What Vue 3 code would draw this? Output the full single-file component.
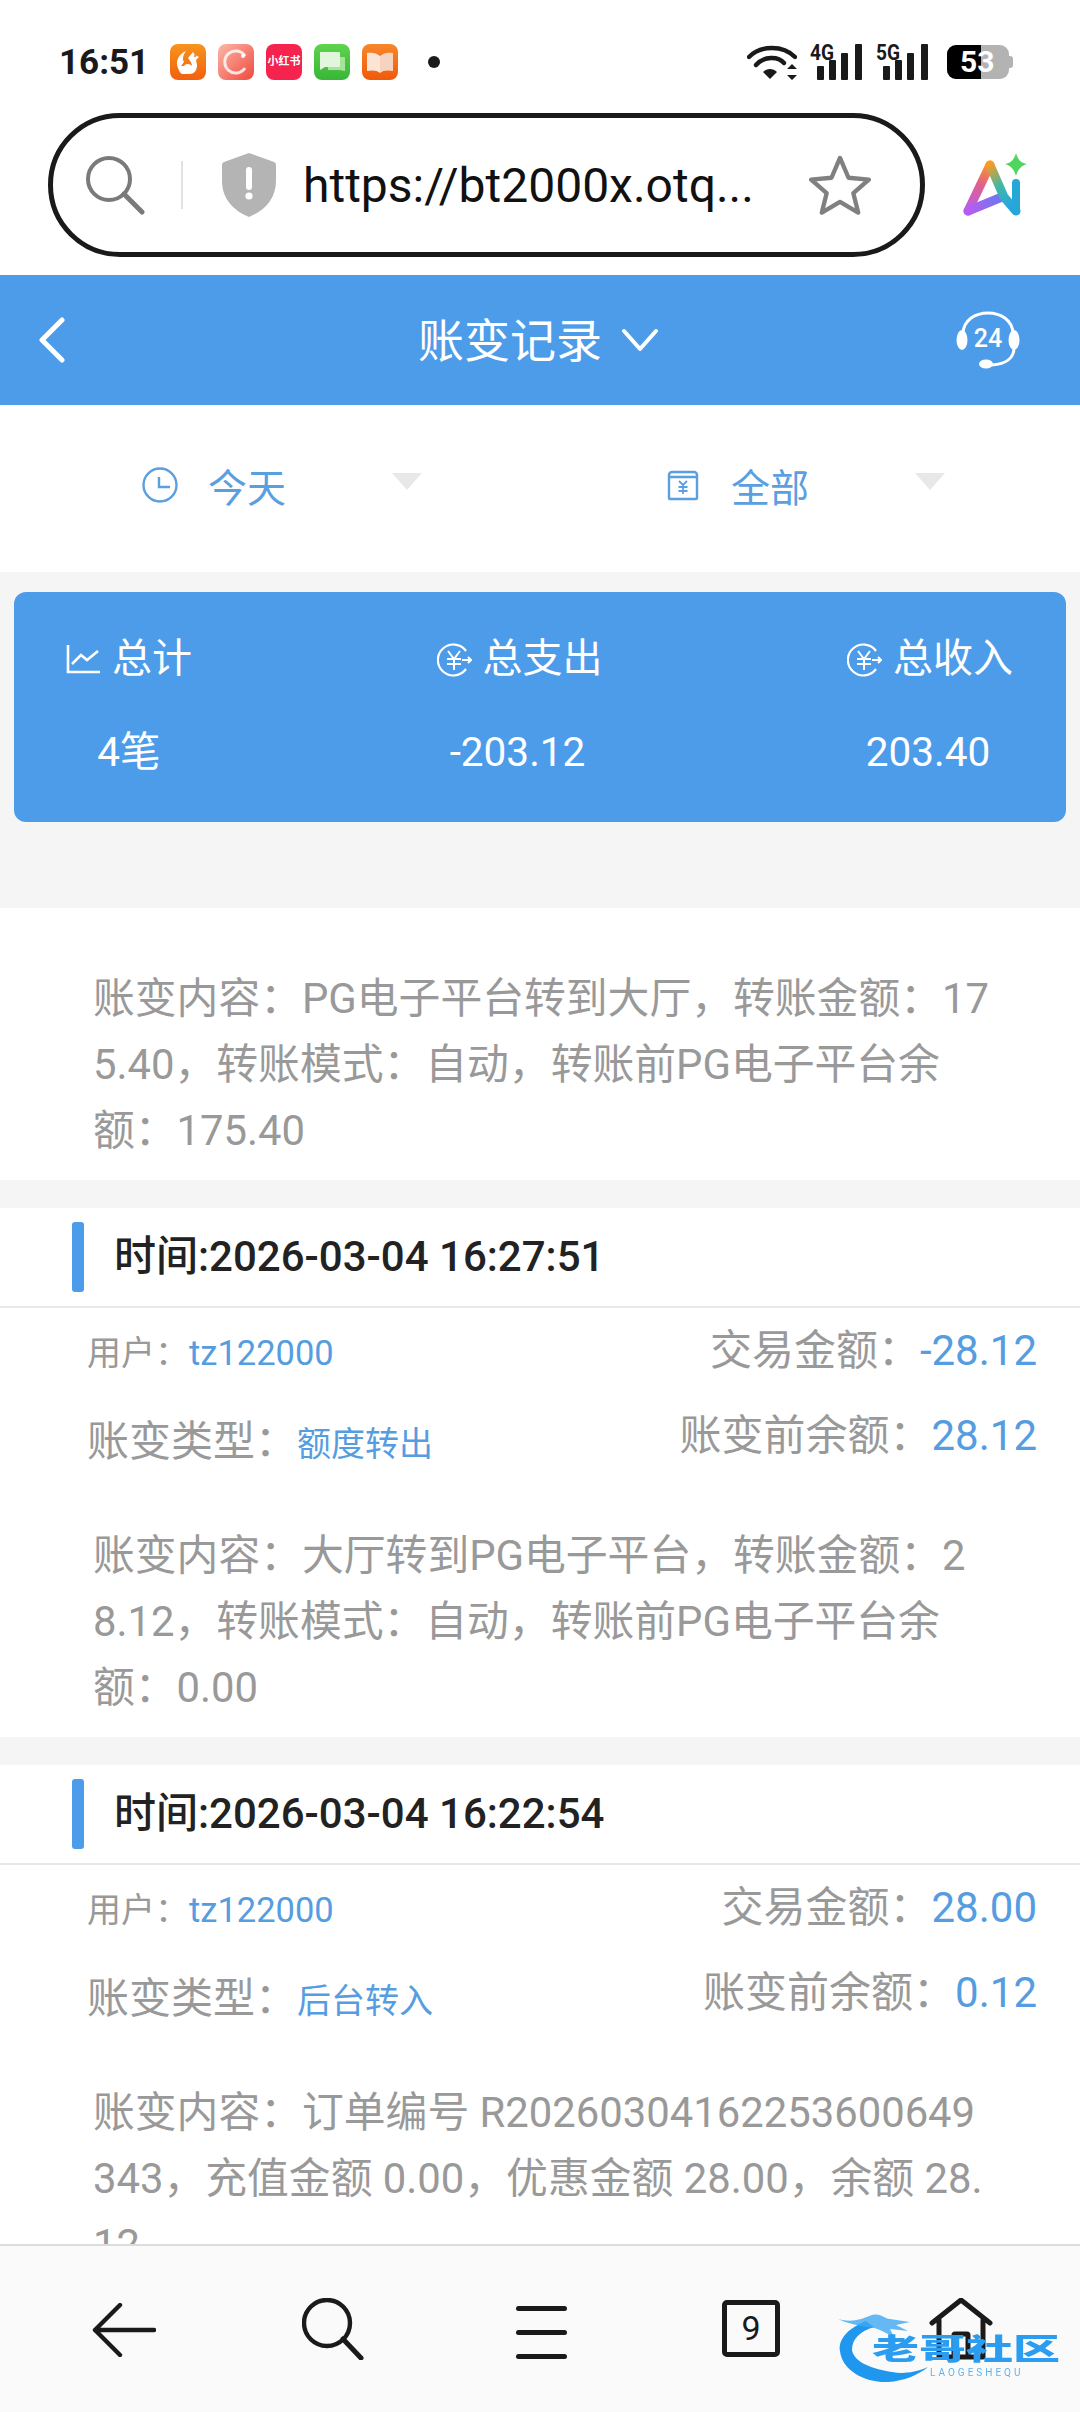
<template>
  <div class="page">
    <!-- status bar -->
    <div class="status">
      <span class="clock">16:51</span>
      <div class="apps">
        <svg class="app" viewBox="0 0 36 36">
          <defs><linearGradient id="uc" x1="0" y1="0" x2="0" y2="1"><stop offset="0" stop-color="#f7941d" /><stop offset="1" stop-color="#f2600f" /></linearGradient></defs>
          <rect width="36" height="36" rx="8" fill="url(#uc)" />
          <path d="M8 24c-3-7 1-14 8-17-3 4-4 8-2 11l-3 4h5c-2 3-2 6 1 8h-5c-2-1-3-3-4-6z" fill="#fff" />
          <path d="M18 14l5-6 2 3 4 2-3 3 1 5c0 6-3 9-8 9-4 0-6-2-6-5 0-3 2-5 5-5 2 0 3 1 4 2 0-3-2-5-4-8z" fill="#fff" />
          <circle cx="25" cy="12" r="1" fill="#f2700f" />
        </svg>
        <svg class="app" viewBox="0 0 36 36">
          <defs><linearGradient id="sw" x1="0" y1="0" x2="1" y2="1"><stop offset="0" stop-color="#fbb9a8" /><stop offset="1" stop-color="#f0483f" /></linearGradient></defs>
          <rect width="36" height="36" rx="8" fill="url(#sw)" />
          <path d="M27 12A11 11 0 1 0 27 24" fill="none" stroke="#fff" stroke-width="3" opacity=".8" />
          <circle cx="25" cy="12" r="2" fill="#fff" />
        </svg>
        <div class="app app-red">小红书</div>
        <svg class="app" viewBox="0 0 36 36">
          <defs><linearGradient id="ms" x1="0" y1="0" x2="0" y2="1"><stop offset="0" stop-color="#5fd34f" /><stop offset="1" stop-color="#39b637" /></linearGradient></defs>
          <rect width="36" height="36" rx="8" fill="url(#ms)" />
          <path d="M14 13h16a1 1 0 0 1 1 1v13l-5-1H14z" fill="#a6e49c" />
          <path d="M6 8h19a1 1 0 0 1 1 1v13a1 1 0 0 1-1 1H11l-5 3z" fill="#e2f6dd" />
        </svg>
        <svg class="app" viewBox="0 0 36 36">
          <defs><linearGradient id="bk" x1="0" y1="0" x2="0" y2="1"><stop offset="0" stop-color="#f8862a" /><stop offset="1" stop-color="#f05a0a" /></linearGradient></defs>
          <rect width="36" height="36" rx="8" fill="url(#bk)" />
          <path d="M5 9c5-1 10 0 13 3v17c-3-3-8-3-13-2z" fill="#fbe3d6" />
          <path d="M31 9c-5-1-10 0-13 3v17c3-3 8-3 13-2z" fill="#f6d3bf" />
        </svg>
        <span class="dot"></span>
      </div>
      <div class="sys">
        <svg class="wifi" width="50" height="36" viewBox="0 0 50 36">
          <path d="M2 13C14 1 36 1 48 13" fill="none" stroke="#1a1a1a" stroke-width="4.400" stroke-linecap="round" />
          <path d="M9 21C17 12 31 12 37 19" fill="none" stroke="#1a1a1a" stroke-width="4.400" stroke-linecap="round" />
          <path d="M16 28c4-4 10-4 14 0l-7 7z" fill="#1a1a1a" />
          <path d="M45 20l5 5H40zM45 36l5-5H40z" fill="#1a1a1a" />
        </svg>
        <svg v-for="net in networks" :key="net" class="signal" width="54" height="44" viewBox="0 0 54 44">
          <text x="0" y="23" class="net-label" textLength="24" lengthAdjust="spacingAndGlyphs">{{ net }}</text>
          <rect x="7" y="29" width="7" height="14" rx="1" fill="#1a1a1a" />
          <rect x="19" y="23" width="7" height="20" rx="1" fill="#1a1a1a" />
          <rect x="31" y="16" width="7" height="27" rx="1" fill="#1a1a1a" />
          <rect x="45" y="7" width="7" height="36" rx="1" fill="#1a1a1a" />
        </svg>
        <div class="battery">
          <span class="bat-fill"></span>
          <span class="bat-tip"></span>
          <span class="bat-num">53</span>
        </div>
      </div>
    </div>

    <!-- browser address bar -->
    <div class="addr-row">
      <div class="addr">
        <svg class="addr-search" width="60" height="60" viewBox="0 0 60 60">
          <circle cx="24" cy="24" r="21" fill="none" stroke="#7a7a7a" stroke-width="4" />
          <path d="M39 39l18 18" stroke="#7a7a7a" stroke-width="5" stroke-linecap="round" />
        </svg>
        <span class="addr-line"></span>
        <svg class="shield" width="54" height="64" viewBox="0 0 54 64">
          <path d="M27 0l25 9c2 1 2 2 2 4v15c0 18-12 30-27 36C12 58 0 46 0 28V13c0-2 0-3 2-4z" fill="#b4b4b4" />
          <rect x="24" y="14" width="6" height="23" rx="3" fill="#fff" />
          <circle cx="27" cy="43" r="3.600" fill="#fff" />
        </svg>
        <span class="url">https://bt2000x.otq...</span>
        <svg class="star" width="62" height="60" viewBox="0 0 64 62">
          <path d="M32 3l8.800 20.500 21 2-16 14 5 20-18.800-11-18.800 11 5-20-16-14 21-2z" fill="none" stroke="#808080" stroke-width="4.500" stroke-linejoin="round" />
        </svg>
      </div>
      <svg class="ai" width="70" height="70" viewBox="0 0 70 70">
        <defs>
          <linearGradient id="a1" gradientUnits="userSpaceOnUse" x1="8" y1="60" x2="30" y2="12"><stop offset="0" stop-color="#b85cf0" /><stop offset=".55" stop-color="#e0608c" /><stop offset="1" stop-color="#ff9a1e" /></linearGradient>
          <linearGradient id="a2" gradientUnits="userSpaceOnUse" x1="8" y1="60" x2="42" y2="44"><stop offset="0" stop-color="#b85cf0" /><stop offset="1" stop-color="#6a78f0" /></linearGradient>
          <linearGradient id="a3" gradientUnits="userSpaceOnUse" x1="30" y1="12" x2="58" y2="60"><stop offset="0" stop-color="#ff9a1e" /><stop offset=".45" stop-color="#3fb8a8" /><stop offset="1" stop-color="#1f9ef5" /></linearGradient>
        </defs>
        <path d="M30 14L8 60" stroke="url(#a1)" stroke-width="9" stroke-linecap="round" fill="none" />
        <path d="M8 60L42 46" stroke="url(#a2)" stroke-width="9" stroke-linecap="round" fill="none" />
        <path d="M30 14L44 46L56 60" stroke="url(#a3)" stroke-width="9" stroke-linecap="round" stroke-linejoin="round" fill="none" />
        <path d="M56 32V60" stroke="#25a7d8" stroke-width="8" stroke-linecap="round" />
        <path d="M56 2c2 7 5 10 11 11-6 2-9 5-11 12-2-7-5-10-11-12 6-1 9-4 11-11z" fill="#4fd65f" />
      </svg>
    </div>

    <!-- page header -->
    <header class="topbar">
      <svg class="back" width="26" height="46" viewBox="0 0 26 46">
        <path d="M23 3L3 23l20 20" fill="none" stroke="#fff" stroke-width="5" stroke-linecap="round" stroke-linejoin="round" />
      </svg>
      <div class="title">
        <span>账变记录</span>
        <svg width="36" height="24" viewBox="0 0 36 24">
          <path d="M2 3l16 18L34 3" fill="none" stroke="#fff" stroke-width="4" stroke-linecap="round" stroke-linejoin="round" />
        </svg>
      </div>
      <svg class="kefu" width="64" height="60" viewBox="0 0 64 60">
        <path d="M7 24C7 -4 57 -4 57 24" fill="none" stroke="#fff" stroke-width="3" />
        <ellipse cx="6" cy="30" rx="5.500" ry="10" fill="#fff" />
        <ellipse cx="58" cy="30" rx="5.500" ry="10" fill="#fff" />
        <path d="M58 38c0 10-8 16-22 17" fill="none" stroke="#fff" stroke-width="3" />
        <ellipse cx="30" cy="54" rx="7" ry="4.600" fill="#fff" />
        <text x="32" y="37" text-anchor="middle" class="kefu-num">24</text>
      </svg>
    </header>

    <div class="scroll">
      <!-- filters -->
      <div class="filters">
        <div class="filter">
          <svg width="36" height="36" viewBox="0 0 36 36">
            <circle cx="18" cy="18" r="16.500" fill="none" stroke="#5a9fe0" stroke-width="2.400" />
            <path d="M17 10v10h11" fill="none" stroke="#5a9fe0" stroke-width="2.400" />
          </svg>
          <span>今天</span>
          <i class="tri"></i>
        </div>
        <div class="filter filter-r">
          <svg width="36" height="36" viewBox="0 0 36 36">
            <path d="M4 8a3 3 0 0 1 3-3h22a3 3 0 0 1 3 3v23a1 1 0 0 1-1 1H5a1 1 0 0 1-1-1zM4 10h28" fill="none" stroke="#5a9fe0" stroke-width="2.400" />
            <path d="M14 14l4 4 4-4M13.500 20h9M13.500 24h9M18 18v9" fill="none" stroke="#5a9fe0" stroke-width="1.800" />
          </svg>
          <span>全部</span>
          <i class="tri"></i>
        </div>
      </div>

      <!-- totals -->
      <div class="totals">
        <div class="summary">
          <div v-for="s in summary" :key="s.label" class="sum-col">
            <div class="sum-label">
              <svg v-if="s.icon === 'trend'" width="35" height="35" viewBox="0 0 35 35">
                <path d="M2 3v27h32" fill="none" stroke="#fff" stroke-width="2.600" />
                <path d="M6 22l9-9 6 5 11-9" fill="none" stroke="#fff" stroke-width="2.600" />
              </svg>
              <svg v-else width="35" height="35" viewBox="0 0 35 35">
                <path d="M29 9A15.500 15.500 0 1 0 29 27" fill="none" stroke="#fff" stroke-width="2.200" />
                <path d="M11 9l6 8 6-8M10 17h14M10 22h14M17 17v11" fill="none" stroke="#fff" stroke-width="2" />
                <path d="M25 18h9M31 15l3 3-3 3" fill="none" stroke="#fff" stroke-width="2" />
              </svg>
              <span>{{ s.label }}</span>
            </div>
            <div class="sum-val">{{ s.value }}</div>
          </div>
        </div>
      </div>

      <!-- records -->
      <section v-for="(r, i) in records" :key="i" class="rec">
        <template v-if="r.time">
          <div class="rec-head"><i class="bar"></i><span>时间:{{ r.time }}</span></div>
          <div class="fields">
            <div class="row row-1">
              <div class="small-label">用户{{ COLON }}<em class="small-val">tz122000</em></div>
              <div class="big">交易金额{{ COLON }}<em>{{ r.amount }}</em></div>
            </div>
            <div class="row row-2">
              <div class="big type">账变类型{{ COLON }}<em class="small-val">{{ r.type }}</em></div>
              <div class="big">账变前余额{{ COLON }}<em>{{ r.before }}</em></div>
            </div>
          </div>
        </template>
        <p class="body" :class="{ 'body-first': !r.time }">{{ r.text }}</p>
      </section>
    </div>

    <!-- browser bottom bar -->
    <nav class="nav">
      <svg width="64" height="54" viewBox="0 0 64 54">
        <path d="M28 2L3 27l25 25M3 27h59" fill="none" stroke="#1a1a1a" stroke-width="4.400" stroke-linecap="round" stroke-linejoin="round" />
      </svg>
      <svg width="62" height="62" viewBox="0 0 62 62">
        <circle cx="25" cy="25" r="23" fill="none" stroke="#1a1a1a" stroke-width="4.400" />
        <path d="M41 41l18 19" stroke="#1a1a1a" stroke-width="5" stroke-linecap="round" />
      </svg>
      <div class="menu"><i></i><i></i><i></i></div>
      <div class="tabs">9</div>
      <svg width="64" height="62" viewBox="0 0 64 62">
        <path d="M3 25L32 2l29 23M10 22v37h44V22" fill="none" stroke="#1a1a1a" stroke-width="5" stroke-linecap="round" stroke-linejoin="round" />
        <path d="M25 59V37a1 1 0 0 1 1-1h12a1 1 0 0 1 1 1v22" fill="none" stroke="#1a1a1a" stroke-width="5" />
      </svg>
      <div class="mark">
        <svg class="mark-swoosh" width="150" height="72" viewBox="0 0 150 72">
          <path d="M28 8C8 16 0 28 2 38C4 58 28 70 50 69C66 68 80 62 90 54C76 60 64 61 54 59C36 56 16 50 14 37C14 26 22 18 36 14Z" fill="#1f97ee" />
          <path d="M0 6C14 10 24 6 34 2C44 0 46 6 52 6L72 9L58 12L70 18L52 16L56 24C44 18 38 14 28 14C18 12 8 10 0 6Z" fill="#3fa9f2" opacity=".8" />
        </svg>
        <span class="mark-cn">老哥社区</span>
        <span class="mark-en">LAOGESHEQU</span>
      </div>
    </nav>
  </div>
</template>

<script setup>
const COLON = '\uFF1A'
const COMMA = '\uFF0C'

const networks = ['4G', '5G']

const summary = [
  { icon: 'trend', label: '总计', value: '4笔' },
  { icon: 'yen', label: '总支出', value: '-203.12' },
  { icon: 'yen', label: '总收入', value: '203.40' }
]

const records = [
  {
    text: `账变内容${COLON}PG电子平台转到大厅${COMMA}转账金额${COLON}175.40${COMMA}转账模式${COLON}自动${COMMA}转账前PG电子平台余额${COLON}175.40`
  },
  {
    time: '2026-03-04 16:27:51',
    amount: '-28.12',
    type: '额度转出',
    before: '28.12',
    text: `账变内容${COLON}大厅转到PG电子平台${COMMA}转账金额${COLON}28.12${COMMA}转账模式${COLON}自动${COMMA}转账前PG电子平台余额${COLON}0.00`
  },
  {
    time: '2026-03-04 16:22:54',
    amount: '28.00',
    type: '后台转入',
    before: '0.12',
    text: `账变内容${COLON}订单编号 R20260304162253600649343${COMMA}充值金额 0.00${COMMA}优惠金额 28.00${COMMA}余额 28.12`
  }
]
</script>

<style>
html, body { margin: 0; background: #fff; }
</style>

<style scoped>
.page {
  width: 1080px;
  height: 2412px;
  display: flex;
  flex-direction: column;
  overflow: hidden;
  background: #fff;
  font-family: Roboto, "Noto Sans CJK SC", sans-serif;
}

/* status bar */
.status {
  height: 102px;
  padding: 11px 71px 0 59px;
  display: flex;
  align-items: center;
  flex: none;
}
.clock {
  width: 111px;
  font-size: 35px;
  font-weight: 700;
  color: #1a1a1a;
}
.apps { display: flex; align-items: center; gap: 12px; }
.app { width: 36px; height: 36px; display: block; }
.app-red {
  background: #f5234e;
  border-radius: 8px;
  color: #fff;
  font-size: 11px;
  font-weight: 700;
  line-height: 36px;
  text-align: center;
  white-space: nowrap;
}
.dot {
  width: 12px;
  height: 12px;
  margin-left: 18px;
  border-radius: 50%;
  background: #1a1a1a;
}
.sys {
  margin-left: auto;
  display: flex;
  align-items: center;
}
.wifi { margin-right: 13px; }
.signal { margin: 0 12px 6px 0; }
.net-label {
  font-family: Roboto, sans-serif;
  font-size: 22px;
  font-weight: 700;
  fill: #1a1a1a;
}
.battery {
  position: relative;
  width: 62px;
  height: 34px;
  border-radius: 9px;
  background: #b3b3b3;
  margin-left: 5px;
}
.bat-fill {
  position: absolute;
  left: 0;
  top: 0;
  bottom: 0;
  width: 34px;
  background: #000;
  border-radius: 9px 0 0 9px;
}
.bat-tip {
  position: absolute;
  right: -4px;
  top: 11px;
  width: 4px;
  height: 12px;
  background: #b3b3b3;
  border-radius: 0 3px 3px 0;
}
.bat-num {
  position: absolute;
  left: 13px;
  top: 0;
  line-height: 34px;
  font-size: 30px;
  font-weight: 700;
  color: #fff;
}

/* address bar */
.addr-row {
  height: 162px;
  flex: none;
  display: flex;
  align-items: flex-start;
  padding-left: 48px;
}
.addr {
  width: 877px;
  height: 144px;
  box-sizing: border-box;
  border: 5px solid #1a1a1a;
  border-radius: 72px;
  display: flex;
  align-items: center;
}
.addr-search { margin-left: 32px; }
.addr-line { width: 2px; height: 48px; margin-left: 36px; background: #e2e2e2; }
.shield { margin-left: 39px; }
.url {
  margin-left: 27px;
  font-size: 48px;
  color: #111;
  white-space: nowrap;
  width: 506px;
}
.ai { margin: 38px 0 0 35px; }

/* header */
.topbar {
  height: 130px;
  flex: none;
  background: #4d9cea;
  display: flex;
  align-items: center;
  padding: 0 60px 0 39px;
}
.title {
  margin-left: 353px;
  display: flex;
  align-items: center;
  gap: 20px;
  font-size: 46px;
  color: #fff;
}
.title span { margin-bottom: 6px; }
.kefu { margin-left: auto; }
.kefu-num {
  font-family: Roboto, sans-serif;
  font-size: 25px;
  font-weight: 500;
  fill: #fff;
}

.scroll {
  flex: 1;
  min-height: 0;
  overflow: hidden;
  background: #f5f5f5;
}

/* filters */
.filters {
  height: 167px;
  box-sizing: border-box;
  padding-bottom: 7px;
  background: #fff;
  display: grid;
  grid-template-columns: 540px 540px;
}
.filter {
  display: flex;
  align-items: center;
  padding-left: 142px;
  color: #5a9fe0;
  font-size: 39px;
}
.filter-r { padding-left: 125px; }
.filter svg { flex: none; margin-right: 30px; }
.tri {
  width: 0;
  height: 0;
  margin: 0 0 8px 106px;
  border-left: 15px solid transparent;
  border-right: 15px solid transparent;
  border-top: 17px solid #e8e8e8;
}

/* totals */
.totals { height: 336px; box-sizing: border-box; padding: 20px 14px 0; }
.summary {
  height: 230px;
  box-sizing: border-box;
  padding: 44px 53px 0 52px;
  background: #4d9cea;
  border-radius: 12px;
  display: flex;
  justify-content: space-between;
  color: #fff;
}
.sum-col { text-align: center; }
.sum-label {
  display: flex;
  align-items: center;
  gap: 11px;
  font-size: 40px;
  line-height: 46px;
}
.sum-val {
  margin-top: 47px;
  padding-right: 4px;
  font-size: 40.500px;
  line-height: 46px;
}
.sum-col:first-child .sum-val { padding-right: 0; }

/* records */
.rec {
  background: #fff;
  margin-bottom: 28px;
}
.rec-head {
  height: 98px;
  display: flex;
  align-items: center;
  padding-left: 72px;
  border-bottom: 2px solid #e8e8e8;
  font-size: 42px;
  font-weight: 500;
  color: #222;
}
.rec-head span { margin-bottom: 9px; }
.bar {
  width: 12px;
  height: 70px;
  margin-right: 30px;
  border-radius: 3px;
  background: #4d9cea;
}
.fields { padding: 0 43px 0 87px; }
.row {
  display: flex;
  justify-content: space-between;
  box-sizing: border-box;
}
.row-1 { height: 85px; align-items: baseline; padding-top: 18px; }
.row-2 { height: 129px; align-items: flex-start; padding-top: 18px; }
.type { margin-top: 6px; }
.small-label { font-size: 34px; color: #999; }
.big { font-size: 42px; line-height: 50px; color: #999; }
.big em, .small-val {
  font-style: normal;
  color: #559de0;
}
.small-val { font-size: 34.500px; }
.type .small-val { font-size: 34px; }
.body {
  margin: 0;
  padding: 1px 90px 16px 93px;
  font-size: 41.800px;
  line-height: 66px;
  color: #999;
  word-break: break-all;
}
.body-first { padding-top: 58px; }

/* bottom bar */
.nav {
  height: 168px;
  flex: none;
  box-sizing: border-box;
  border-top: 2px solid #dcdcdc;
  background: #fafafa;
  position: relative;
  display: flex;
  align-items: flex-start;
}
.nav > svg:nth-child(1) { margin: 57px 0 0 92px; }
.nav > svg:nth-child(2) { margin: 52px 0 0 146px; }
.menu {
  margin: 60px 0 0 152px;
  width: 51px;
  display: flex;
  flex-direction: column;
  gap: 19px;
}
.menu i { display: block; height: 5px; border-radius: 3px; background: #1a1a1a; }
.tabs {
  margin: 54px 0 0 155px;
  width: 58px;
  height: 57px;
  box-sizing: border-box;
  border: 5px solid #1a1a1a;
  border-radius: 5px;
  text-align: center;
  font-size: 34px;
  line-height: 47px;
  color: #1a1a1a;
}
.nav > svg:nth-child(5) { margin: 52px 0 0 149px; }

.mark {
  position: absolute;
  left: 838px;
  top: 67px;
  width: 222px;
  height: 72px;
  filter: blur(0.7px);
}
.mark-swoosh { position: absolute; left: 0; top: 0; }
.mark-cn {
  position: absolute;
  left: 34px;
  top: 8px;
  font-size: 47px;
  line-height: 58px;
  font-weight: 900;
  color: #2b9df0;
  white-space: nowrap;
  transform: scaleY(0.62);
}
.mark-en {
  position: absolute;
  left: 92px;
  top: 54px;
  font-size: 10px;
  line-height: 12px;
  letter-spacing: 3px;
  color: #5fb4f2;
  white-space: nowrap;
}
</style>
